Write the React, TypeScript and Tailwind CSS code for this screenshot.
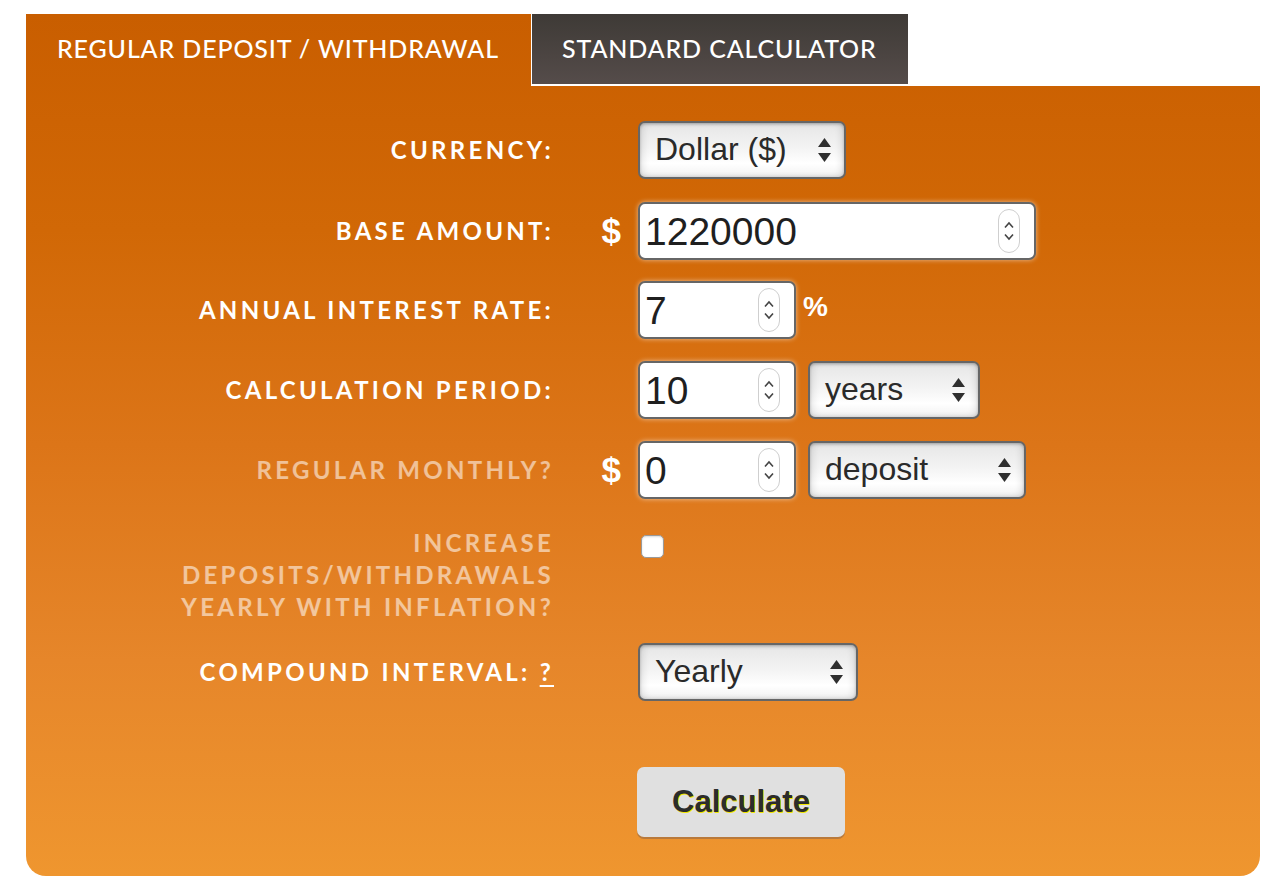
import React from "react";

const labelCls =
  "w-[528px] shrink-0 text-right font-['Lato',sans-serif] font-bold text-[24px] tracking-[3.3px] uppercase leading-[32px]";

function Arrows() {
  return (
    <svg width="15" height="28" viewBox="0 0 15 28" className="shrink-0">
      <polygon points="7.5,2 14,11 1,11" fill="#2f2f2f" />
      <polygon points="1,17 14,17 7.5,26" fill="#2f2f2f" />
    </svg>
  );
}

function Spinner() {
  return (
    <div className="w-[22px] h-[44px] rounded-[11px] border border-[#cfcfcf] bg-white flex flex-col items-center justify-center gap-[4px] shrink-0">
      <svg width="12" height="8" viewBox="0 0 12 8">
        <polyline points="2,6.5 6,2 10,6.5" fill="none" stroke="#444" strokeWidth="1.6" />
      </svg>
      <svg width="12" height="8" viewBox="0 0 12 8">
        <polyline points="2,1.5 6,6 10,1.5" fill="none" stroke="#444" strokeWidth="1.6" />
      </svg>
    </div>
  );
}

function Select({ text, w }: { text: string; w: string }) {
  return (
    <div
      className={`${w} h-[58px] shrink-0 rounded-[7px] border-[2px] border-[#666] bg-[linear-gradient(to_bottom,#e6e6e6_0%,#f3f3f3_45%,#ffffff_75%,#f1f1f1_100%)] shadow-[inset_0_1px_3px_rgba(0,0,0,0.25),inset_-4px_0_6px_rgba(0,0,0,0.08),inset_4px_0_6px_rgba(0,0,0,0.08)] flex items-center justify-between pl-[15px] pr-[12px] font-['Liberation_Sans',Arial,sans-serif] text-[32px] text-[#2a2a2a]`}
    >
      <span className="leading-none -mt-[2px]">{text}</span>
      <Arrows />
    </div>
  );
}

function NumInput({ text, w }: { text: string; w: string }) {
  return (
    <div
      className={`${w} h-[58px] shrink-0 rounded-[7px] border-[2px] border-[#666] bg-white shadow-[0_0_5px_rgba(255,255,255,0.55)] flex items-center justify-between pl-[5px] pr-[14px] font-['Liberation_Sans',Arial,sans-serif] text-[39px] text-[#1f1f1f]`}
    >
      <span className="leading-none">{text}</span>
      <Spinner />
    </div>
  );
}

function Row({
  label,
  dim,
  dollar,
  children,
  className = "",
}: {
  label: React.ReactNode;
  dim?: boolean;
  dollar?: boolean;
  children: React.ReactNode;
  className?: string;
}) {
  return (
    <div className={`flex items-center ${className}`}>
      <div className={`${labelCls} ${dim ? "text-white/55" : "text-white"}`}>{label}</div>
      <div className="w-[84px] shrink-0 pr-[17px] text-right font-['Liberation_Sans',Arial,sans-serif] font-bold text-[35px] text-white leading-none -mt-[2px]">
        {dollar ? "$" : ""}
      </div>
      <div className="flex items-center gap-[12px]">{children}</div>
    </div>
  );
}

export default function App() {
  return (
    <div className="w-[1281px] h-[893px] bg-white pt-[14px] pl-[26px] pr-[21px] overflow-hidden">
      <div className="h-[862px] rounded-b-[20px] bg-[linear-gradient(to_bottom,#c95e00_0%,#d16806_25%,#dc7518_50%,#e6862a_75%,#ef962f_100%)] flex flex-col">
        <div className="flex h-[72px] shrink-0">
          <div className="w-[505px] h-[72px] flex items-center pl-[31px] font-['Lato',sans-serif] font-medium text-[25px] text-white tracking-[0.85px] pb-[2px] whitespace-nowrap">
            REGULAR DEPOSIT / WITHDRAWAL
          </div>
          <div className="w-[377px] h-[72px] border-l border-b-2 border-white bg-[linear-gradient(to_bottom,#3e3a36,#554c4a)] flex items-center pl-[30px] font-['Lato',sans-serif] font-medium text-[25px] tracking-[0.85px] text-white whitespace-nowrap">
            STANDARD CALCULATOR
          </div>
          <div className="flex-1 h-[72px] bg-white" />
        </div>

        <div className="flex flex-col pt-[35px]">
          <Row label="Currency:">
            <Select text="Dollar ($)" w="w-[208px]" />
          </Row>
          <Row label="Base amount:" dollar className="mt-[23px]">
            <NumInput text="1220000" w="w-[398px]" />
          </Row>
          <Row label="Annual interest rate:" className="mt-[21px]">
            <NumInput text="7" w="w-[158px]" />
            <span className="-ml-[5px] font-['Liberation_Sans',Arial,sans-serif] font-bold text-[28px] text-white -mt-[6px]">
              %
            </span>
          </Row>
          <Row label="Calculation period:" className="mt-[22px]">
            <NumInput text="10" w="w-[158px]" />
            <Select text="years" w="w-[172px]" />
          </Row>
          <Row label="Regular monthly?" dim dollar className="mt-[22px]">
            <NumInput text="0" w="w-[158px]" />
            <Select text="deposit" w="w-[218px]" />
          </Row>
          <div className="flex items-start mt-[28px]">
            <div className={`${labelCls} text-white/55`}>
              Increase
              <br />
              deposits/withdrawals
              <br />
              yearly with inflation?
            </div>
            <div className="w-[84px] shrink-0" />
            <div className="mt-[8px] ml-[3px] w-[23px] h-[23px] rounded-[5px] bg-white border border-[#9a9a9a] shadow-[inset_0_1px_2px_rgba(0,0,0,0.15)]" />
          </div>
          <Row
            label={
              <>
                Compound interval:&nbsp;<span className="underline underline-offset-[4px]">?</span>
              </>
            }
            className="mt-[20px]"
          >
            <Select text="Yearly" w="w-[220px]" />
          </Row>
          <div className="flex mt-[66px]">
            <div className="w-[611px] shrink-0" />
            <div className="w-[208px] h-[70px] rounded-[7px] bg-[#e0e0e0] shadow-[0_2px_0_#b97a3c] flex items-center justify-center font-['Liberation_Sans',Arial,sans-serif] font-bold text-[31px] text-[#2c2c2c] [text-shadow:1px_1px_0_#f2e600]">
              Calculate
            </div>
          </div>
        </div>
      </div>
    </div>
  );
}
